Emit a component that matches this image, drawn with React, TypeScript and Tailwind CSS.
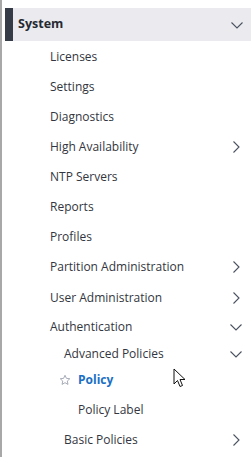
type Item = {
  label: string;
  indent: number;
  h: number;
  chevron?: "right" | "down";
  active?: boolean;
};

const items: Item[] = [
  { label: "Licenses", indent: 50, h: 30 },
  { label: "Settings", indent: 50, h: 30 },
  { label: "Diagnostics", indent: 50, h: 30 },
  { label: "High Availability", indent: 50, h: 30, chevron: "right" },
  { label: "NTP Servers", indent: 50, h: 30 },
  { label: "Reports", indent: 50, h: 30 },
  { label: "Profiles", indent: 50, h: 30 },
  { label: "Partition Administration", indent: 50, h: 30, chevron: "right" },
  { label: "User Administration", indent: 50, h: 31, chevron: "right" },
  { label: "Authentication", indent: 50, h: 28, chevron: "down" },
  { label: "Advanced Policies", indent: 64, h: 25, chevron: "down" },
  { label: "Policy", indent: 78, h: 28, active: true },
  { label: "Policy Label", indent: 78, h: 31 },
  { label: "Basic Policies", indent: 64, h: 30, chevron: "right" },
];

const ChevRight = () => (
  <svg width="14" height="14" viewBox="0 0 14 14" fill="none">
    <polyline
      points="4.5,1.5 10,7 4.5,12.5"
      stroke="#4a5160"
      strokeWidth="1.1"
    />
  </svg>
);

const ChevDown = () => (
  <svg width="14" height="14" viewBox="0 0 14 14" fill="none">
    <polyline
      points="1.5,4.5 7,10 12.5,4.5"
      stroke="#4a5160"
      strokeWidth="1.1"
    />
  </svg>
);

const Row = ({ item }: { item: Item }) => {
  return (
    <div
      className="relative flex items-center pr-[8px]"
      style={{ height: item.h, paddingLeft: item.indent }}
    >
      {item.active && (
        <svg
          className="absolute left-[59px] top-1/2 -translate-y-1/2"
          width="12"
          height="12"
          viewBox="0 0 24 24"
          fill="none"
          stroke="#9ca3af"
          strokeWidth="1.8"
          strokeLinejoin="round"
        >
          <path d="M12 2.5l2.9 6.2 6.7.8-5 4.6 1.4 6.7L12 17.4l-5.9 3.4 1.4-6.7-5-4.6 6.7-.8z" />
        </svg>
      )}
      <span
        className={
          item.active
            ? "flex-1 text-[12px] font-bold text-[#1a6fc4]"
            : "flex-1 text-[12px] text-[#333640]"
        }
      >
        {item.label}
      </span>
      {item.chevron === "right" && <ChevRight />}
      {item.chevron === "down" && <ChevDown />}
    </div>
  );
};

const App = () => {
  return (
    <div
      className="relative h-[457px] w-[251px] overflow-hidden bg-white"
      style={{ fontFamily: '"Open Sans", "Noto Sans", sans-serif' }}
    >
      <div className="flex h-full border-l-[2px] border-[#a8a8a8]">
        <div className="flex-1 pt-[8px] pl-[3px]">
          {/* Section header */}
          <div className="flex h-[33px] items-center bg-[#ebebef]">
            <div className="h-full w-[8px] bg-[#353c48]" />
            <span className="flex-1 pl-[5px] text-[12.5px] font-bold text-[#262a33]">
              System
            </span>
            <div className="mr-[7px]">
              <ChevDown />
            </div>
          </div>

          <div className="-ml-[5px] pt-[1px]">
            {items.map((item) => (
              <Row key={item.label} item={item} />
            ))}
          </div>
        </div>
      </div>

      {/* mouse pointer */}
      <svg
        className="absolute left-[173px] top-[368px]"
        width="14"
        height="20"
        viewBox="0 0 14 20"
      >
        <path
          d="M1 1v15l3.5-3.5 2.5 6 2.5-1-2.5-6h5z"
          fill="white"
          stroke="#111"
          strokeWidth="1"
          strokeLinejoin="round"
        />
      </svg>
    </div>
  );
};

export default App;
